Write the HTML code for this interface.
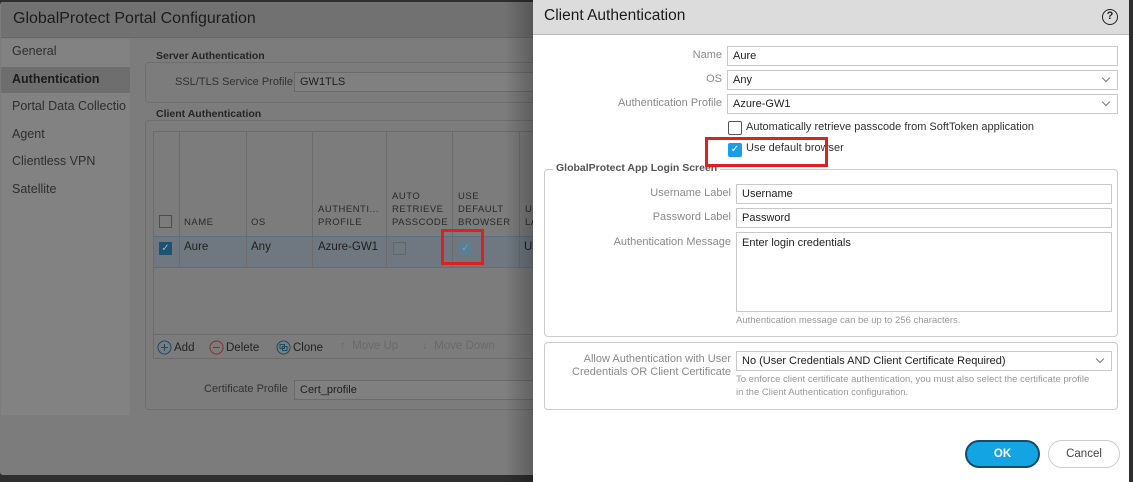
<!DOCTYPE html><html><head><style>
*{box-sizing:border-box;margin:0;padding:0}
body{width:1133px;height:482px;overflow:hidden;background:#2e2e2e;font-family:"Liberation Sans",sans-serif;position:relative}
.a{position:absolute}
.lbl{position:absolute;text-align:right;color:#8a8a8a;font-size:11px}
.in{position:absolute;border:1px solid #c8c8c8;background:#fff;font-size:11px;color:#222;padding:0 5px;height:20px;line-height:18px}
.din{position:absolute;border:1px solid #6a6a6a;background:#808080;font-size:11px;color:#1e1e1e;padding:0 5px;height:20px;line-height:18px}
.chev{position:absolute;right:8px;top:4px;width:6px;height:6px;border-right:1px solid #777;border-bottom:1px solid #777;transform:rotate(45deg)}
.th{position:absolute;font-size:9.5px;color:#2a2a2a;letter-spacing:.5px;line-height:13px}
.tb{position:absolute;top:340px;font-size:11.5px;color:#222;display:flex;align-items:center;gap:2px;white-space:nowrap}
</style></head><body>
<div class="a" style="left:0;top:2px;width:540px;height:473px;background:#7c7c7c;border-radius:3px"></div>
<div class="a" style="left:1px;top:2px;width:539px;height:36px;background:#717171;border-bottom:1px solid #666"></div>
<div class="a" style="left:13px;top:10px;font-size:16px;color:#1c1c1c">GlobalProtect Portal Configuration</div>
<div class="a" style="left:1px;top:39px;width:129px;height:376px;background:#828282"></div>
<div class="a" style="left:1px;top:67px;width:129px;height:26px;background:#6e6e6e"></div>
<div class="a" style="left:12px;top:38px;font-size:12.5px;color:#2e2e2e;line-height:27.5px">General<br><b style="color:#1c1c1c">Authentication</b><br>Portal Data Collectio<br>Agent<br>Clientless VPN<br>Satellite</div>
<div class="a" style="left:145px;top:62px;width:400px;height:41px;border:1px solid #6e6e6e;border-radius:4px"></div>
<div class="a" style="left:152px;top:50px;background:#7c7c7c;padding:0 4px;font-size:10.5px;font-weight:bold;color:#262626">Server Authentication</div>
<div class="a" style="left:175px;top:76px;font-size:11px;color:#333">SSL/TLS Service Profile</div>
<div class="din" style="left:294px;top:72px;width:250px">GW1TLS</div>
<div class="a" style="left:145px;top:120px;width:400px;height:290px;border:1px solid #6e6e6e;border-radius:4px"></div>
<div class="a" style="left:152px;top:108px;background:#7c7c7c;padding:0 4px;font-size:10.5px;font-weight:bold;color:#262626">Client Authentication</div>
<div class="a" style="left:153px;top:131px;width:390px;height:228px;border:1px solid #6c6c6c"></div>
<div class="a" style="left:154px;top:236px;width:390px;height:32px;background:#6f7880;border-top:1px solid #5c7080;border-bottom:1px solid #5c7080"></div>
<div class="a" style="left:179px;top:131px;width:1px;height:137px;background:#6c6c6c"></div>
<div class="a" style="left:246px;top:131px;width:1px;height:137px;background:#6c6c6c"></div>
<div class="a" style="left:312px;top:131px;width:1px;height:137px;background:#6c6c6c"></div>
<div class="a" style="left:386px;top:131px;width:1px;height:137px;background:#6c6c6c"></div>
<div class="a" style="left:452px;top:131px;width:1px;height:137px;background:#6c6c6c"></div>
<div class="a" style="left:519px;top:131px;width:1px;height:137px;background:#6c6c6c"></div>
<div class="a" style="left:159px;top:215px;width:13px;height:13px;border:1.5px solid #245a78"></div>
<div class="th" style="left:184px;top:216px">NAME</div>
<div class="th" style="left:251px;top:216px">OS</div>
<div class="th" style="left:318px;top:203px">AUTHENTI...<br>PROFILE</div>
<div class="th" style="left:392px;top:190px">AUTO<br>RETRIEVE<br>PASSCODE</div>
<div class="th" style="left:458px;top:190px">USE<br>DEFAULT<br>BROWSER</div>
<div class="th" style="left:525px;top:203px">US<br>LA</div>
<div class="a" style="left:159px;top:242px;width:13px;height:13px;background:#1d5270;color:#aac;font-size:10px;text-align:center;line-height:13px">✓</div>
<div class="a" style="left:184px;top:241px;font-size:11.5px;color:#1e1e1e">Aure</div>
<div class="a" style="left:251px;top:241px;font-size:11.5px;color:#1e1e1e">Any</div>
<div class="a" style="left:318px;top:241px;font-size:11.5px;color:#1e1e1e">Azure-GW1</div>
<div class="a" style="left:393px;top:242px;width:13px;height:13px;border:1px solid #666"></div>
<div class="a" style="left:459px;top:242px;width:13px;height:13px;background:#5a7f96;color:#89a;font-size:10px;text-align:center;line-height:13px">✓</div>
<div class="a" style="left:524px;top:241px;font-size:11.5px;color:#1e1e1e">Us</div>
<div class="a" style="left:154px;top:334px;width:390px;height:1px;background:#6c6c6c"></div>
<div class="tb" style="left:157px"><svg width="15" height="15"><circle cx="7.5" cy="7.5" r="6.5" fill="none" stroke="#1d4b66"/><path d="M7.5 4v7M4 7.5h7" stroke="#1d4b66"/></svg>Add</div>
<div class="tb" style="left:209px"><svg width="15" height="15"><circle cx="7.5" cy="7.5" r="6.5" fill="none" stroke="#8a3030"/><path d="M4 7.5h7" stroke="#8a3030"/></svg>Delete</div>
<div class="tb" style="left:276px"><svg width="15" height="15"><circle cx="7.5" cy="7.5" r="6.5" fill="none" stroke="#1d4b66"/><rect x="4" y="4.5" width="4.5" height="4" fill="none" stroke="#1d4b66"/><rect x="6.5" y="6.5" width="4.5" height="4" fill="none" stroke="#1d4b66"/></svg>Clone</div>
<div class="tb" style="left:340px;color:#6a6a6a">↑&nbsp; Move Up</div>
<div class="tb" style="left:422px;color:#6a6a6a">↓&nbsp; Move Down</div>
<div class="a" style="left:204px;top:383px;font-size:11px;color:#333">Certificate Profile</div>
<div class="din" style="left:294px;top:380px;width:250px">Cert_profile</div>
<div class="a" style="left:441px;top:229px;width:43px;height:36px;border:3px solid #e0201f"></div>
<div class="a" style="left:505px;top:0;width:35px;height:482px;background:linear-gradient(90deg,rgba(0,0,0,0),rgba(0,0,0,.3))"></div>
<div class="a" style="left:533px;top:0;width:596px;height:482px;background:#fff"></div>
<div class="a" style="left:533px;top:0;width:596px;height:35px;background:#dcdcdc;border-bottom:1px solid #bbb"></div>
<div class="a" style="left:544px;top:7px;font-size:15.5px;color:#1c1c1c">Client Authentication</div>
<div class="a" style="left:1102px;top:9px;width:16px;height:16px;border:1.5px solid #222;border-radius:50%;font-size:11px;text-align:center;line-height:13px;font-weight:bold;color:#222">?</div>
<div class="lbl" style="left:560px;width:162px;top:49px">Name</div>
<div class="in" style="left:727px;top:46px;width:391px">Aure</div>
<div class="lbl" style="left:560px;width:162px;top:73px">OS</div>
<div class="in" style="left:727px;top:70px;width:391px">Any<i class="chev"></i></div>
<div class="lbl" style="left:560px;width:162px;top:97px">Authentication Profile</div>
<div class="in" style="left:727px;top:94px;width:391px">Azure-GW1<i class="chev"></i></div>
<div class="a" style="left:728px;top:121px;width:14px;height:14px;border:1px solid #555;border-radius:2px"></div>
<div class="a" style="left:746px;top:121px;font-size:11px;color:#333">Automatically retrieve passcode from SoftToken application</div>
<div class="a" style="left:728px;top:143px;width:14px;height:14px;background:#1a9ee6;border-radius:2px;color:#fff;font-size:10px;text-align:center;line-height:14px">✓</div>
<div class="a" style="left:746px;top:142px;font-size:11px;color:#333">Use default browser</div>
<div class="a" style="left:544px;top:169px;width:574px;height:168px;border:1px solid #ccc;border-radius:4px"></div>
<div class="a" style="left:553px;top:162px;background:#fff;padding:0 3px;font-size:10.5px;font-weight:bold;color:#555">GlobalProtect App Login Screen</div>
<div class="a" style="left:705px;top:137px;width:123px;height:30px;border:3px solid #e0201f"></div>
<div class="lbl" style="left:560px;width:171px;top:187px">Username Label</div>
<div class="in" style="left:736px;top:184px;width:376px">Username</div>
<div class="lbl" style="left:560px;width:171px;top:211px">Password Label</div>
<div class="in" style="left:736px;top:208px;width:376px">Password</div>
<div class="lbl" style="left:560px;width:171px;top:236px">Authentication Message</div>
<div class="in" style="left:736px;top:232px;width:376px;height:80px;padding-top:1px">Enter login credentials</div>
<div class="a" style="left:736px;top:315px;font-size:9.5px;color:#999">Authentication message can be up to 256 characters.</div>
<div class="a" style="left:544px;top:342px;width:574px;height:68px;border:1px solid #ccc;border-radius:4px"></div>
<div class="lbl" style="left:560px;width:171px;top:353px;line-height:13px">Allow Authentication with User<br>Credentials OR Client Certificate</div>
<div class="in" style="left:736px;top:351px;width:376px">No (User Credentials AND Client Certificate Required)<i class="chev"></i></div>
<div class="a" style="left:736px;top:373px;font-size:9.5px;color:#999;line-height:13px">To enforce client certificate authentication, you must also select the certificate profile<br>in the Client Authentication configuration.</div>
<div class="a" style="left:965px;top:440px;width:75px;height:28px;background:#13a4e4;border:2px solid #1b4a63;border-radius:14px;color:#fff;font-size:11.5px;font-weight:bold;text-align:center;line-height:24px">OK</div>
<div class="a" style="left:1048px;top:440px;width:72px;height:28px;border:1px solid #ccc;border-radius:14px;color:#444;font-size:11.5px;text-align:center;line-height:26px">Cancel</div>
</body></html>
